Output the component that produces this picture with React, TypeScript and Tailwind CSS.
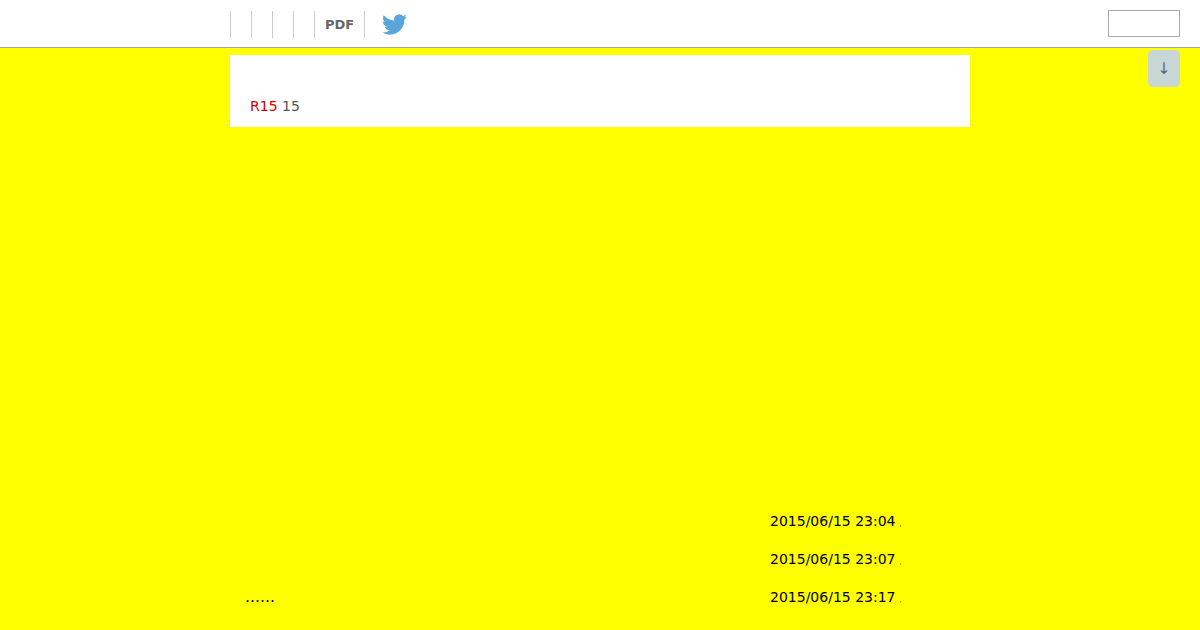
export default function App() {
  const rows = [
    { left: "", date: "2015/06/15 23:04" },
    { left: "", date: "2015/06/15 23:07" },
    { left: "……", date: "2015/06/15 23:17" },
  ];
  return (
    <div className="relative h-[630px] w-[1200px] overflow-hidden bg-[#ffff00] font-['DejaVu_Sans',sans-serif] text-[14px]">
      <header className="flex h-[48px] items-start border-b border-[#a5a5a0] bg-white pl-[230px] pr-[20px]">
        <nav className="mt-[11px] flex h-[27px] items-center">
          <span className="h-full w-[21px] border-l border-[#cccccc]" />
          <span className="h-full w-[21px] border-l border-[#cccccc]" />
          <span className="h-full w-[21px] border-l border-[#cccccc]" />
          <span className="h-full w-[21px] border-l border-[#cccccc]" />
          <span className="flex h-full w-[50px] items-center border-l border-[#cccccc] pl-[10px] text-[13px] font-bold text-[#666666]">PDF</span>
          <span className="flex h-full items-center border-l border-[#cccccc] pl-[17px]">
            <svg viewBox="0 0 24 24" className="h-[25px] w-[25px] fill-[#5aa5dc]" aria-hidden="true">
              <path d="M23.95 4.57a10 10 0 0 1-2.82.77 4.96 4.96 0 0 0 2.16-2.72c-.95.55-2 .95-3.12 1.18a4.92 4.92 0 0 0-8.38 4.48C7.69 8.1 4.07 6.13 1.64 3.16a4.82 4.82 0 0 0-.66 2.48c0 1.7.87 3.2 2.19 4.1a4.9 4.9 0 0 1-2.23-.62v.06a4.92 4.92 0 0 0 3.95 4.83 5 5 0 0 1-2.21.08 4.94 4.94 0 0 0 4.6 3.42A9.87 9.87 0 0 1 0 19.54a14 14 0 0 0 7.56 2.21c9.05 0 14-7.5 14-13.98 0-.21 0-.42-.02-.63a9.94 9.94 0 0 0 2.41-2.55z" />
            </svg>
          </span>
        </nav>
        <input aria-label="search" className="ml-auto mt-[10px] h-[27px] w-[72px] border border-[#a9a9a9] bg-white" />
      </header>

      <main className="mx-auto w-[740px] pt-[7px]">
        <section className="h-[72px] bg-white pl-[20px] pt-[42px] leading-[18px] text-[#555555]">
          <span className="text-[#cc0000]">R15</span> 15
        </section>
        <ul className="mt-[375px]">
          {rows.map((r) => (
            <li key={r.date} className="flex h-[38px] items-center text-black">
              <span className="w-[540px] pl-[15px] text-[15px]">{r.left}</span>
              <span>{r.date}</span>
              <span className="ml-[4px] mt-[4px] text-[6px]">,</span>
            </li>
          ))}
        </ul>
      </main>

      <button className="absolute right-[20px] top-[50px] flex h-[37px] w-[32px] items-center justify-center rounded-[5px] bg-[#c9d6d6] text-[16px] text-[#5f6b6b]">↓</button>
    </div>
  );
}
